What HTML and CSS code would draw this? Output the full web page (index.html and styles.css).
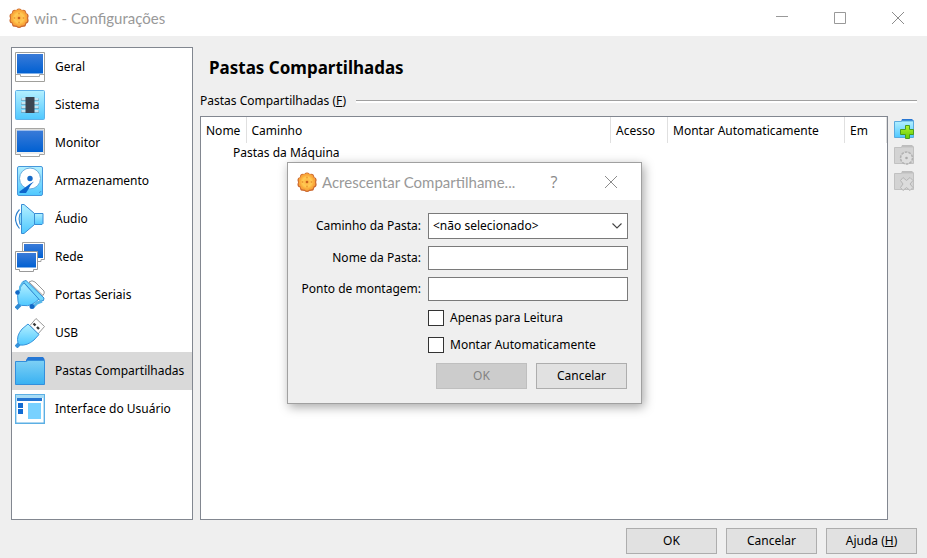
FILE: index.html
```html
<!DOCTYPE html>
<html lang="pt-BR">
<head>
<meta charset="utf-8">
<title>win - Configurações</title>
<link rel="stylesheet" href="styles.css">
</head>
<body>
<svg class="defs" aria-hidden="true">
  <defs>
    <linearGradient id="screen" x1="0" y1="0" x2="0" y2="1"><stop offset="0" stop-color="#3a7bd8"/><stop offset="1" stop-color="#0060d2"/></linearGradient>
    <linearGradient id="sky" x1="0" y1="0" x2="0" y2="1"><stop offset="0" stop-color="#b4f0ff"/><stop offset="1" stop-color="#4fc8ff"/></linearGradient>
    <linearGradient id="folder" x1="0" y1="0" x2="0" y2="1"><stop offset="0" stop-color="#7ed0f5"/><stop offset="1" stop-color="#38b1f2"/></linearGradient>
    <linearGradient id="green" x1="0" y1="0" x2="0" y2="1"><stop offset="0" stop-color="#b3f22c"/><stop offset="1" stop-color="#62cc0c"/></linearGradient>
    <radialGradient id="orange"><stop offset="0" stop-color="#ffb040"/><stop offset=".65" stop-color="#ffcb55"/><stop offset="1" stop-color="#fbab38"/></radialGradient>
    <symbol id="gear" viewBox="0 0 20 20">
      <g fill="#cc6a30"><circle cx="10.200" cy="10.500" r="9"/><circle cx="10" cy="3.400" r="2.900"/><circle cx="14.200" cy="4.600" r="2.900"/><circle cx="16.700" cy="8.100" r="2.900"/><circle cx="16.700" cy="12.400" r="2.900"/><circle cx="14.200" cy="15.900" r="2.900"/><circle cx="10" cy="17" r="2.900"/><circle cx="5.900" cy="15.900" r="2.900"/><circle cx="3.400" cy="12.400" r="2.900"/><circle cx="3.400" cy="8.100" r="2.900"/><circle cx="5.900" cy="4.600" r="2.900"/></g>
      <g fill="#f9a63c"><circle cx="10" cy="10" r="8.200"/><circle cx="10" cy="3.500" r="2.200"/><circle cx="13.900" cy="4.700" r="2.200"/><circle cx="16.200" cy="8" r="2.200"/><circle cx="16.200" cy="12" r="2.200"/><circle cx="13.900" cy="15.300" r="2.200"/><circle cx="10" cy="16.500" r="2.200"/><circle cx="6.100" cy="15.300" r="2.200"/><circle cx="3.800" cy="12" r="2.200"/><circle cx="3.800" cy="8" r="2.200"/><circle cx="6.100" cy="4.700" r="2.200"/></g>
      <circle cx="10" cy="10" r="7" fill="url(#orange)"/>
      <circle cx="10" cy="10" r="1.300" fill="#c9601c"/>
      <g fill="#ee9a34"><circle cx="10" cy="5.500" r=".9"/><circle cx="14.500" cy="10" r=".9"/><circle cx="10" cy="14.500" r=".9"/><circle cx="5.500" cy="10" r=".9"/></g>
    </symbol>
    <symbol id="close" viewBox="0 0 12 12"><path d="M0 0 12 12M12 0 0 12" fill="none" stroke="#8c8c8c"/></symbol>
  </defs>
</svg>

<div class="window">
  <header class="titlebar">
    <svg class="gear"><use href="#gear"/></svg>
    <h1 class="caption">win - Configurações</h1>
    <div class="window-controls">
      <button type="button" aria-label="Minimizar"><svg viewBox="0 0 12 12"><path d="M0 4.500H12" stroke="#999"/></svg></button>
      <button type="button" aria-label="Maximizar"><svg viewBox="0 0 12 12"><path d="M.5 .5H11.500V11.500H.5Z" fill="none" stroke="#999"/></svg></button>
      <button type="button" aria-label="Fechar"><svg><use href="#close"/></svg></button>
    </div>
  </header>

  <div class="body">
    <nav class="sidebar">
      <a href="#geral"><svg viewBox="0 0 30 30"><path d="M.5 .5H29.500V29.500H.5Z" fill="#fff" stroke="#a0a09c"/><path d="M2 2H28V21.500H2Z" fill="url(#screen)"/><path d="M1 22.500H5.500V24.500H24.500V22.500H29" fill="none" stroke="#a8a8a6"/></svg>Geral</a>
      <a href="#sistema"><svg viewBox="0 0 30 30"><rect x=".5" y=".5" width="29" height="29" rx="1" fill="url(#sky)" stroke="#5fb1e8"/><path d="M6 9.500H24M6 13.500H24M6 17.500H24M6 21.500H24" stroke="#6f9db8" stroke-width="2.600"/><path d="M6.500 9H23.500M6.500 13H23.500M6.500 17H23.500M6.500 21H23.500" stroke="#e4f8ff" stroke-width="1.400"/><path d="M10.500 7H19.500V23H10.500Z" fill="#3b4452"/></svg>Sistema</a>
      <a href="#monitor"><svg viewBox="0 0 30 30"><path d="M.5 .5H29.500V26.500H24.500V28.500H5.500V26.500H.5Z" fill="#fff" stroke="#a5a5a3"/><path d="M1.500 1.500H28.500V25H1.500Z" fill="none" stroke="#dcdcda"/><path d="M2 2.500H28V24H2Z" fill="url(#screen)"/></svg>Monitor</a>
      <a href="#armazenamento"><svg viewBox="0 0 30 30"><rect x="2.500" y=".5" width="25" height="29" rx="1.500" fill="url(#sky)" stroke="#4697dc"/><circle cx="15" cy="12.500" r="10.500" fill="#fff" stroke="#6daede"/><path d="M19 15.500Q14 18 10 21.500L4.500 25.500V27H11L13.500 23Q15 19 19 15.500Z" fill="#0d65cc"/><circle cx="15" cy="12.500" r="2.700" fill="#1669c7"/><path d="M24 26.500A2 2 0 0 0 26 25" stroke="#4697dc" fill="none"/></svg>Armazenamento</a>
      <a href="#audio"><svg viewBox="0 0 30 30"><path d="M4.500 5.500Q-3.500 14.500 4.500 24.500" fill="none" stroke="#2c80ce" stroke-width="1.200"/><path d="M6.500 9.500H5Q3 14.500 5 20.500H6.500Z" fill="#8bddf9" stroke="#388dd6"/><path d="M6.500 .5H9L19.500 9.500V20.500L9 29.500H6.500Z" fill="url(#sky)" stroke="#388dd6"/><path d="M19.500 9.500H28V19.500L27 20.500H19.500Z" fill="url(#sky)" stroke="#388dd6"/></svg>Áudio</a>
      <a href="#rede"><svg viewBox="0 0 30 30"><path d="M7.500 .5H29.500V17.500H26V19.500H12V17.500H7.500Z" fill="#fff" stroke="#a0a0a0"/><path d="M9 2H28V16H9Z" fill="url(#screen)"/><path d="M.5 9.500H22.500V27.500H18.500V29.500H4.500V27.500H.5Z" fill="#fff" stroke="#999"/><path d="M2 11H21V25.500H2Z" fill="url(#screen)"/></svg>Rede</a>
      <a href="#seriais"><svg viewBox="0 0 30 30"><path d="M14 2Q17-.5 20 2L29 11Q30 13 28 15.500Z" fill="#fff" stroke="#999"/><path d="M1 28.500 5 24.500" stroke="#318bd4" stroke-width="4"/><path d="M9 3Q1 10 3 21Q3 26 9 25.500Q16 27 24 19Z" fill="url(#sky)" stroke="#3793db"/><path d="M8 1.500 11 .5 29 18 28.500 20.500 25.500 21Z" fill="#73d8fb" stroke="#318bd4"/><path d="M8 2 5 7V10L2 12" fill="none" stroke="#57b9eb" stroke-width="2"/><path d="M27 21 22 23 18 27" fill="none" stroke="#58b7e9" stroke-width="3"/><circle cx="2.500" cy="12.500" r="2.300" fill="#1369c7"/><circle cx="17" cy="26.500" r="2.500" fill="#1369c7"/></svg>Portas Seriais</a>
      <a href="#usb"><svg viewBox="0 0 30 30"><path d="M15 7.500 21 .5 29.500 8.500 23 16Z" fill="#fff" stroke="#999"/><path d="M18.500 5.500 20.500 7.500M22 9 24 11" stroke="#333" stroke-width="2.300"/><path d="M1 29 4 26" stroke="#3793db" stroke-width="4"/><path d="M3 25Q1 18 7 11L13 6 24 16.500 19 22Q12 28 5 27Z" fill="url(#sky)" stroke="#3793db"/></svg>USB</a>
      <a href="#pastas" class="selected" aria-current="page"><svg viewBox="0 0 30 30"><path d="M11 6V4L13 1H28L29.500 3V7Z" fill="#2477d5"/><path d="M.5 5.500H11L13 4.500H29.500V28.500H.5Z" fill="url(#folder)" stroke="#338fdc"/></svg>Pastas Compartilhadas</a>
      <a href="#interface"><svg viewBox="0 0 30 30"><path d="M.7 .7H29.300V29.300H.7Z" fill="#fff" stroke="#5cafe4" stroke-width="1.400"/><path d="M1 1H29V4H1Z" fill="#a7dcf5"/><path d="M2 4H27V7H2Z" fill="#2475d1"/><path d="M3 9H8V14H3ZM3 15H8V20H3Z" fill="#126bd2"/><path d="M13 9H26V25H13Z" fill="#78d1ff"/></svg>Interface do Usuário</a>
    </nav>

    <main class="content">
      <h2>Pastas Compartilhadas</h2>
      <div class="group-label"><span>Pastas Compartilhadas (<u>F</u>)</span></div>
      <div class="shares">
        <div class="table-box">
          <table>
            <colgroup><col class="col-name"><col><col class="col-access"><col class="col-mount"><col class="col-at"></colgroup>
            <thead><tr><th>Nome</th><th>Caminho</th><th>Acesso</th><th>Montar Automaticamente</th><th>Em</th></tr></thead>
            <tbody><tr><td colspan="5">Pastas da Máquina</td></tr></tbody>
          </table>
        </div>
        <div class="tools">
          <button type="button" aria-label="Acrescentar pasta"><svg viewBox="0 0 20 20"><path d="M7 3 8 0H18L20 2V5H7Z" fill="#2876d2"/><path d="M.5 2.500H7L8 2H19.500V18.500H.5Z" fill="url(#sky)" stroke="#5aaade"/><path d="M11.500 6.500H15.500V10.500H19.500V15.500H15.500V19.500H11.500V15.500H6.500V10.500H11.500Z" fill="url(#green)" stroke="#4a9d20"/></svg></button>
          <button type="button" aria-label="Editar pasta" disabled><svg viewBox="0 0 20 20"><path d="M7 3 8 0H18L20 2V5H7Z" fill="#bdbdbd"/><path d="M.5 2.500H7L8 2H19.500V18.500H.5Z" fill="#d3d3d3" stroke="#c1c1c1"/><circle cx="12.500" cy="13" r="5.700" fill="#dfdfdf" stroke="#b2b2b2" stroke-width="2" stroke-dasharray="2.500 1"/><circle cx="12.500" cy="13" r="5.200" fill="#dedede"/><circle cx="12.500" cy="13" r="1.300" fill="#aaa"/></svg></button>
          <button type="button" aria-label="Remover pasta" disabled><svg viewBox="0 0 20 20"><path d="M7 3 8 0H18L20 2V5H7Z" fill="#bdbdbd"/><path d="M.5 2.500H7L8 2H19.500V18.500H.5Z" fill="#d3d3d3" stroke="#c1c1c1"/><path d="M9 6.500 12.500 9.500 16 6.500 19 9.500 16 13 19 16.500 16 19.500 12.500 16.500 9 19.500 6.500 16.500 9 13 6.500 9.500Z" fill="#dcdcdc" stroke="#b5b5b5"/></svg></button>
        </div>
      </div>
    </main>
  </div>

  <footer class="actions">
    <button type="button">OK</button>
    <button type="button">Cancelar</button>
    <button type="button">Ajuda (<u>H</u>)</button>
  </footer>
</div>

<section class="dialog" role="dialog" aria-labelledby="dialog-title">
  <header class="dialog-title">
    <svg class="gear"><use href="#gear"/></svg>
    <h2 id="dialog-title" class="caption">Acrescentar Compartilhame...</h2>
    <button type="button" class="help">?</button>
    <button type="button" class="dismiss" aria-label="Fechar"><svg><use href="#close"/></svg></button>
  </header>
  <form class="dialog-form">
    <label for="path">Caminho da Pasta:</label>
    <div class="select-wrap">
      <select id="path"><option>&lt;não selecionado&gt;</option></select>
      <svg viewBox="0 0 10 6"><path d="M.5 .5 5 5 9.500 .5" fill="none" stroke="#444" stroke-width="1.100"/></svg>
    </div>
    <label for="name">Nome da Pasta:</label>
    <input type="text" id="name">
    <label for="mount">Ponto de montagem:</label>
    <input type="text" id="mount">
    <div class="checks">
      <label><input type="checkbox">Apenas para Leitura</label>
      <label><input type="checkbox">Montar Automaticamente</label>
    </div>
    <div class="dialog-actions">
      <button type="button" disabled>OK</button>
      <button type="button">Cancelar</button>
    </div>
  </form>
</section>
</body>
</html>
```

FILE: styles.css
```css
* { box-sizing: border-box; }

body {
  margin: 0;
  background: #efefef;
  color: #000;
  font: 12px/16px "Noto Sans", "DejaVu Sans", sans-serif;
}

h1, h2 { margin: 0; }
svg { display: block; }
button, input, select { font: inherit; color: inherit; }
.defs { position: absolute; width: 0; height: 0; }

.window {
  display: flex;
  flex-direction: column;
  height: 100vh;
}

.titlebar {
  display: flex;
  align-items: center;
  height: 36px;
  padding-left: 9px;
  background: #fff;
}

.gear { width: 20px; height: 20px; flex: none; }

.caption {
  flex: 1;
  margin-left: 5px;
  color: #999;
  font: 15px/20px Lato, "Open Sans", sans-serif;
  white-space: nowrap;
}

.titlebar button, .dialog-title button, .tools button {
  padding: 0;
  border: 0;
  background: none;
}

.window-controls { display: flex; }
.window-controls button { width: 58px; height: 32px; }
.window-controls svg { width: 12px; height: 12px; margin: 0 auto; }

.body {
  display: flex;
  flex: 1;
  gap: 7px;
  min-height: 0;
  padding: 11px 10px 0 11px;
}

.sidebar {
  width: 182px;
  flex: none;
  border: 1px solid #828790;
  background: #fff;
}

.sidebar a {
  display: flex;
  align-items: center;
  gap: 10px;
  height: 38px;
  padding-left: 3px;
  color: #000;
  text-decoration: none;
  white-space: nowrap;
}

.sidebar .selected { background: #d9d9d9; }
.sidebar svg { width: 30px; height: 30px; flex: none; }

.content {
  display: flex;
  flex: 1;
  flex-direction: column;
  min-width: 0;
}

.content h2 {
  padding: 11px 9px 9px;
  font-size: 17px;
  line-height: 20px;
}

.group-label {
  display: flex;
  align-items: center;
  gap: 10px;
  margin: 6px 0 7px;
}

.group-label::after {
  content: "";
  flex: 1;
  height: 2px;
  border-top: 1px solid #a0a0a0;
  background: #fff;
}

.shares { display: flex; flex: 1; gap: 6px; }

.table-box {
  flex: 1;
  border: 1px solid #828790;
  background: #fff;
}

table { width: 100%; border-collapse: collapse; table-layout: fixed; }
.col-name { width: 45px; }
.col-access { width: 57px; }
.col-mount { width: 177px; }
.col-at { width: 42px; }

th {
  height: 26px;
  padding: 2px 0 0 5px;
  border-right: 1px solid #e0e0e0;
  font-weight: normal;
  text-align: left;
  white-space: nowrap;
}

td { height: 20px; padding: 0 0 0 32px; }

.tools {
  display: flex;
  flex-direction: column;
  gap: 6px;
  width: 23px;
  padding-top: 3px;
}

.tools svg { width: 20px; height: 20px; }

.actions {
  display: flex;
  justify-content: flex-end;
  gap: 9px;
  padding: 8px 10px 4px;
}

.actions button, .dialog-actions button {
  width: 91px;
  height: 26px;
  padding: 0;
  border: 1px solid #adadad;
  background: #e1e1e1;
}

.dialog {
  position: absolute;
  top: 162px;
  left: 287px;
  width: 355px;
  border: 1px solid #a0a0a0;
  background: #efefef;
  box-shadow: 2px 3px 10px rgba(0, 0, 0, .35);
}

.dialog-title {
  display: flex;
  align-items: center;
  height: 37px;
  padding: 0 24px 0 9px;
  background: #fff;
}

.dialog-title .help {
  width: 12px;
  margin-right: 45px;
  color: #888;
  font: 16px/20px "Open Sans", "Noto Sans", sans-serif;
}

.dialog-title svg:not(.gear) { width: 12px; height: 12px; }

.dialog-form {
  display: grid;
  grid-template-columns: 133px 1fr;
  align-items: center;
  gap: 7px;
  padding: 13px 13px 14px 0;
}

.dialog-form > label { text-align: right; white-space: nowrap; }

.dialog-form input[type="text"], select {
  width: 100%;
  border: 1px solid #7a7a7a;
  border-radius: 0;
  background: #fff;
}

.dialog-form input[type="text"] { height: 24px; }
select { display: block; height: 26px; padding: 0 4px; appearance: none; }
.select-wrap { position: relative; }
.select-wrap svg { position: absolute; top: 10px; right: 6px; width: 10px; height: 6px; pointer-events: none; }

.checks {
  display: flex;
  grid-column: 2;
  flex-direction: column;
  gap: 11px;
  padding: 2px 0 3px;
}

.checks label { display: flex; align-items: center; gap: 6px; }

.checks input {
  width: 16px;
  height: 16px;
  margin: 0;
  border: 1px solid #333;
  background: #fff;
  appearance: none;
}

.dialog-actions {
  display: flex;
  grid-column: 1 / -1;
  justify-content: flex-end;
  gap: 9px;
  padding-right: 1px;
}

.dialog-actions button:disabled { border-color: #bfbfbf; background: #ccc; color: #838383; }
```
